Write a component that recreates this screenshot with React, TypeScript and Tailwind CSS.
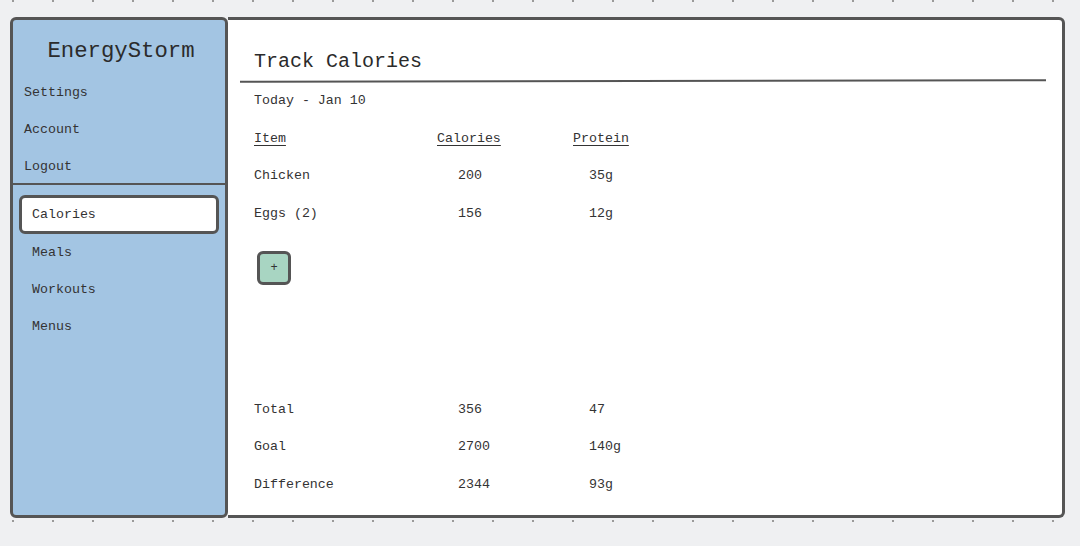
const mono = "font-['Liberation_Mono',monospace]";

const topNav = ["Settings", "Account", "Logout"];
const subNav = ["Calories", "Meals", "Workouts", "Menus"];

const items = [
  { name: "Chicken", cal: "200", protein: "35g" },
  { name: "Eggs (2)", cal: "156", protein: "12g" },
];

const totals = [
  { name: "Total", cal: "356", protein: "47" },
  { name: "Goal", cal: "2700", protein: "140g" },
  { name: "Difference", cal: "2344", protein: "93g" },
];

function Row({ name, cal, protein }: { name: string; cal: string; protein: string }) {
  return (
    <div className="grid h-[37.5px] grid-cols-[204px_131px_1fr] items-center">
      <span>{name}</span>
      <span>{cal}</span>
      <span>{protein}</span>
    </div>
  );
}

function Sidebar() {
  return (
    <aside className="flex w-[218px] shrink-0 flex-col rounded-md border-[3px] border-[#555] bg-[#a3c5e3]">
      <h1 className="pl-[4px] pt-[17px] text-center text-[22.3px] leading-[28px] text-[#2b2b2b]">
        EnergyStorm
      </h1>
      <nav className="mt-[9.5px] flex flex-col">
        {topNav.map((label) => (
          <a key={label} className="flex h-[37px] items-center pl-[11px]">
            {label}
          </a>
        ))}
      </nav>
      <div className="mr-[-3px] -mt-[2.5px] h-[2px] bg-[#555]" />
      <nav className="mt-[10px] flex flex-col">
        {subNav.map((label) =>
          label === "Calories" ? (
            <a
              key={label}
              className="mx-[6px] flex h-[39px] items-center rounded-md border-[3px] border-[#555] bg-white pl-[10px]"
            >
              {label}
            </a>
          ) : (
            <a key={label} className="flex h-[37.3px] items-center pl-[19px]">
              {label}
            </a>
          ),
        )}
      </nav>
    </aside>
  );
}

export default function App() {
  return (
    <div
      className={`${mono} h-[546px] w-[1080px] bg-[#eff0f2] bg-[radial-gradient(circle,#9a9a9a_0.9px,transparent_1.2px)] bg-[length:40px_40px] bg-[position:-7px_-19px] pl-[10px] pt-[17px] text-[13.3px] text-[#333]`}
    >
      <div className="flex h-[501px] w-[1055px]">
        <Sidebar />
        <main className="flex flex-1 flex-col rounded-r-md border-y-[3px] border-r-[3px] border-[#555] bg-white">
          <h2 className="pl-[26px] pt-[27.5px] text-[20px] leading-[28px] text-[#2b2b2b]">
            Track Calories
          </h2>
          <div className="ml-[12px] mr-[16px] mt-[4.5px] h-[2px] -rotate-[0.1deg] bg-[#555]" />
          <div className="pl-[26px]">
            <div className="flex h-[38px] items-center">Today - Jan 10</div>
            <div className="grid h-[37.5px] grid-cols-[183px_136px_1fr] items-center">
              <span className="underline underline-offset-[3px]">Item</span>
              <span className="underline underline-offset-[3px]">Calories</span>
              <span className="underline underline-offset-[3px]">Protein</span>
            </div>
            {items.map((r) => (
              <Row key={r.name} {...r} />
            ))}
            <button
              type="button"
              className="ml-[3px] mt-[18.5px] flex h-[34px] w-[34px] items-center justify-center rounded-md border-[3px] border-[#555] bg-[#a8d5c2] text-[12px] leading-none text-[#333]"
            >
              +
            </button>
            <div className="mt-[106px]">
              {totals.map((r) => (
                <Row key={r.name} {...r} />
              ))}
            </div>
          </div>
        </main>
      </div>
    </div>
  );
}
